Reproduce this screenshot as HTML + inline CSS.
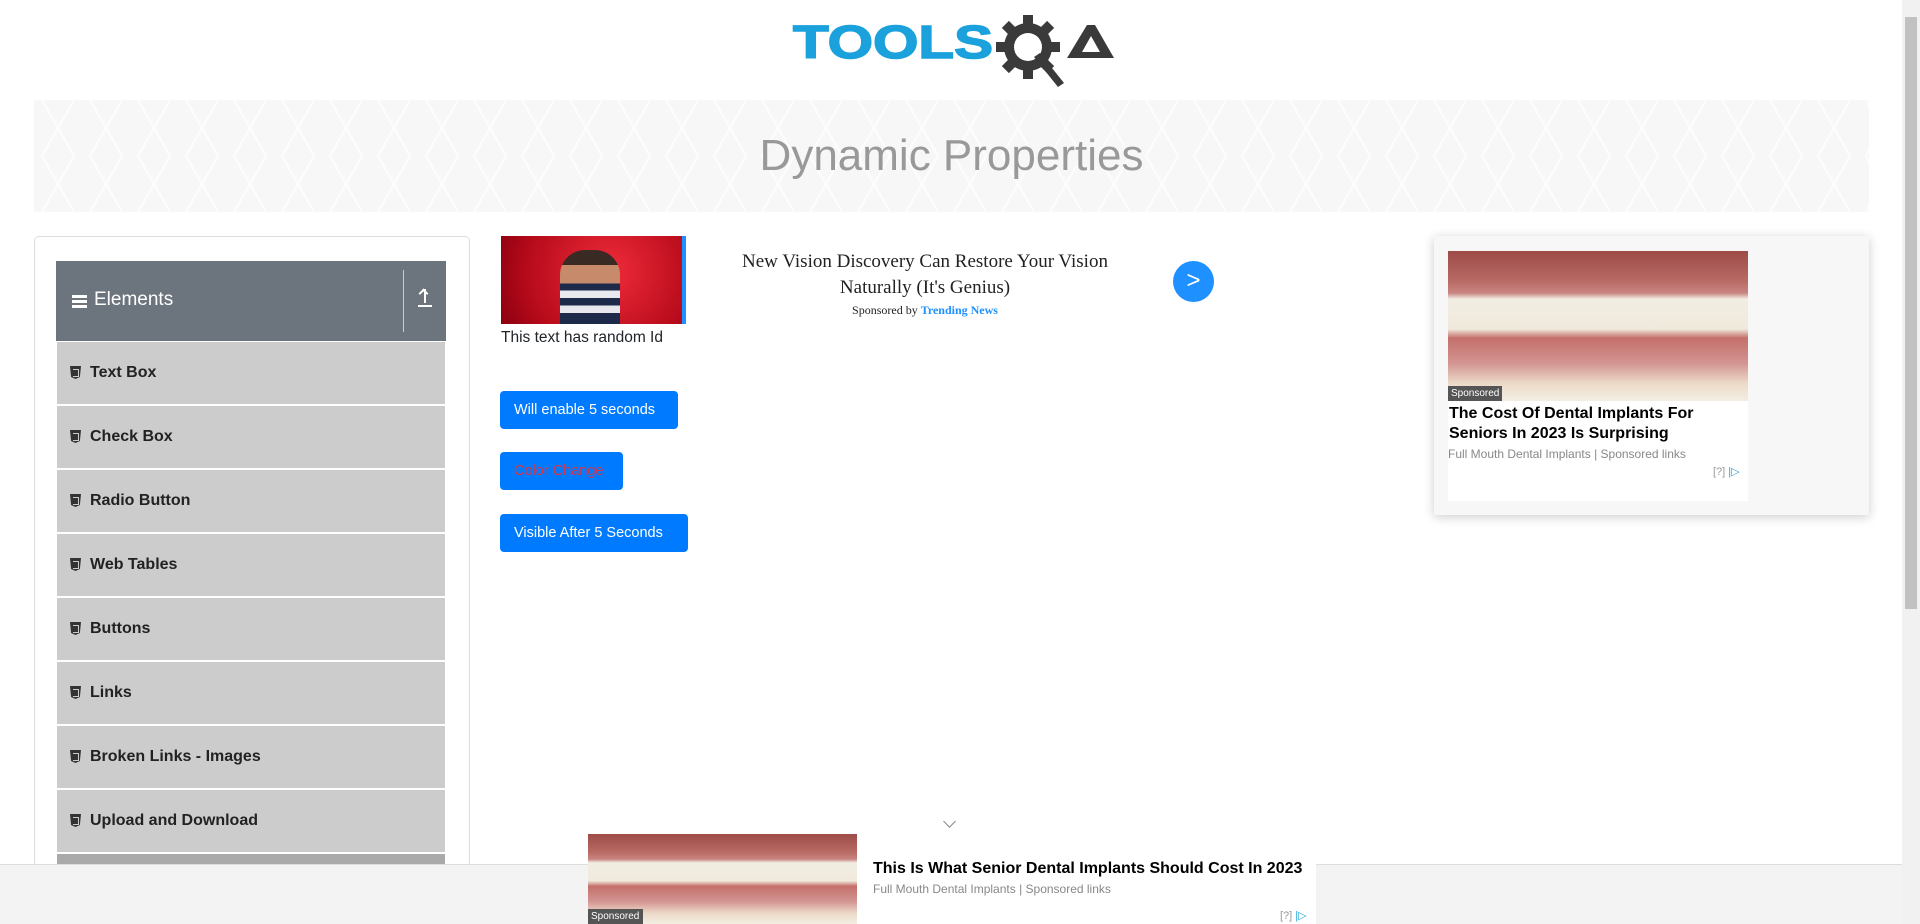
<!DOCTYPE html>
<html><head><meta charset="utf-8"><style>
*{box-sizing:border-box;margin:0;padding:0}
html,body{width:1920px;height:924px;overflow:hidden;background:#fff;font-family:"Liberation Sans",sans-serif;color:#212529}
.abs{position:absolute}
.banner{left:34px;top:100px;width:1835px;height:112px;background:#f7f7f7;
background-image:linear-gradient(60deg,transparent 48%,#fdfdfd 49%,#fdfdfd 51%,transparent 52%),linear-gradient(-60deg,transparent 48%,#fdfdfd 49%,#fdfdfd 51%,transparent 52%);background-size:48px 56px;}
.title{left:34px;top:100px;width:1835px;height:112px;text-align:center;line-height:112px;font-size:44px;color:#999;font-weight:300}
.card{left:34px;top:236px;width:436px;height:680px;border:1px solid #ddd;border-radius:5px}
.hdr{left:56px;top:261px;width:390px;height:80px;background:#6c757d;color:#fff}
.item{left:57px;width:388px;height:62px;background:#ccc;font-weight:bold;font-size:16px;color:#222;line-height:62px;padding-left:33px}
.ic{position:absolute;left:13px;top:24px;width:11px;height:13px;background:#333;clip-path:polygon(0 0,100% 0,90% 85%,50% 100%,10% 85%)}
.ic:after{content:"";position:absolute;left:3px;top:3px;width:5px;height:6px;border:1.5px solid #ccc;border-left:none}
.btn{left:500px;height:38px;background:#007bff;color:#fff;border-radius:4px;font-size:14.5px;line-height:38px;padding-left:14px;white-space:nowrap}
.bar{left:0;top:864px;width:1902px;height:60px;background:#f3f3f3;border-top:1px solid #ddd}
.teeth{background:linear-gradient(180deg,#9d4b48 0%,#b86a64 20%,#c98582 28%,#f1ede2 32%,#efeadc 52%,#c46f6b 58%,#d39592 75%,#ecd9c8 88%,#f3efe2 100%)}
</style></head><body>
<svg class="abs" style="left:790px;top:14px" width="330" height="80" viewBox="0 0 330 80">
<text x="3" y="44" font-family="Liberation Sans" font-weight="bold" font-size="46" fill="#1ba1dc" textLength="200" lengthAdjust="spacingAndGlyphs" stroke="#1ba1dc" stroke-width="1.5">TOOLS</text>
<g transform="translate(238,33)" fill="#3a3a3a">
<circle r="24"/>
<g><rect x="-5" y="-32" width="10" height="12"/><rect x="-5" y="-32" width="10" height="12" transform="rotate(45)"/><rect x="-5" y="-32" width="10" height="12" transform="rotate(90)"/><rect x="-5" y="-32" width="10" height="12" transform="rotate(135)"/><rect x="-5" y="-32" width="10" height="12" transform="rotate(180)"/><rect x="-5" y="-32" width="10" height="12" transform="rotate(225)"/><rect x="-5" y="-32" width="10" height="12" transform="rotate(270)"/><rect x="-5" y="-32" width="10" height="12" transform="rotate(315)"/></g>
<circle r="14" fill="#fff"/>
<path d="M6 10 L30 40 L36 36 L12 6 Z"/>
</g>
<path d="M277 44 L297 11 L305 11 L324 44 Z M292 38 L310 38 L301 22 Z" fill="#3a3a3a" fill-rule="evenodd"/>
</svg>
<div class="abs banner"></div>
<div class="abs title">Dynamic Properties</div>
<div class="abs card"></div>
<div class="abs hdr">
<div class="abs" style="left:16px;top:34px;width:15px;height:3px;background:#fff;box-shadow:0 5px 0 #fff,0 10px 0 #fff"></div>
<div class="abs" style="left:38px;top:0;line-height:78px;font-size:19px">Elements</div>
<div class="abs" style="left:347px;top:9px;width:1px;height:62px;background:#ccc"></div>
<div class="abs" style="left:362px;top:26px;width:14px;height:20px;border-bottom:2px solid #fff"></div>
<div class="abs" style="left:368px;top:28px;width:2px;height:14px;background:#fff"></div>
<div class="abs" style="left:364px;top:29px;width:7px;height:7px;border-left:2px solid #fff;border-top:2px solid #fff;transform:rotate(45deg)"></div>
</div>
<div class="abs item" style="top:342px"><i class="ic"></i>Text Box</div>
<div class="abs item" style="top:406px"><i class="ic"></i>Check Box</div>
<div class="abs item" style="top:470px"><i class="ic"></i>Radio Button</div>
<div class="abs item" style="top:534px"><i class="ic"></i>Web Tables</div>
<div class="abs item" style="top:598px"><i class="ic"></i>Buttons</div>
<div class="abs item" style="top:662px"><i class="ic"></i>Links</div>
<div class="abs item" style="top:726px"><i class="ic"></i>Broken Links - Images</div>
<div class="abs item" style="top:790px"><i class="ic"></i>Upload and Download</div>
<div class="abs" style="left:57px;top:854px;width:388px;height:12px;background:#aaa"></div>

<div class="abs" style="left:501px;top:236px;width:182px;height:88px;background:radial-gradient(circle at 60% 40%,#ef2b3a,#b50a1a 70%,#8a0010)"></div>
<div class="abs" style="left:560px;top:250px;width:60px;height:74px;background:linear-gradient(180deg,#3a2a24 0 20%,#c78a6a 20% 45%,#1d2a4a 45% 55%,#e8e8ee 55% 65%,#1d2a4a 65% 75%,#e8e8ee 75% 85%,#1d2a4a 85%);border-radius:25px 25px 0 0"></div>
<div class="abs" style="left:682px;top:236px;width:4px;height:88px;background:#1e90ff"></div>
<div class="abs" style="left:710px;top:249px;width:430px;text-align:center;font-family:'Liberation Serif',serif;font-size:19px;line-height:26px;color:#222">New Vision Discovery Can Restore Your Vision<br>Naturally (It's Genius)</div>
<div class="abs" style="left:710px;top:303px;width:430px;text-align:center;font-family:'Liberation Serif',serif;font-size:12px;color:#222">Sponsored by <b style="color:#1e90ff">Trending News</b></div>
<div class="abs" style="left:1173px;top:261px;width:41px;height:41px;border-radius:50%;background:#1e90ff;color:#fff;text-align:center;line-height:40px;font-size:24px">&gt;</div>
<div class="abs" style="left:501px;top:329px;font-size:15.5px">This text has random Id</div>

<div class="abs btn" style="top:391px;width:178px">Will enable 5 seconds</div>
<div class="abs btn" style="top:452px;width:123px;color:#dc3545">Color Change</div>
<div class="abs btn" style="top:514px;width:188px">Visible After 5 Seconds</div>

<div class="abs" style="left:1434px;top:236px;width:435px;height:279px;background:#f7f7f7;box-shadow:0 2px 10px rgba(0,0,0,.2)"></div>
<div class="abs" style="left:1448px;top:251px;width:300px;height:250px;background:#fff"></div>
<div class="abs teeth" style="left:1448px;top:251px;width:300px;height:150px"></div>
<div class="abs" style="left:1448px;top:386px;width:54px;height:15px;background:#555;color:#fff;font-size:10px;line-height:15px;padding-left:3px">Sponsored</div>
<div class="abs" style="left:1449px;top:404px;width:300px;font-weight:bold;font-size:16px;line-height:20px;color:#000">The Cost Of Dental Implants For Seniors In 2023 Is Surprising</div>
<div class="abs" style="left:1448px;top:447px;font-size:12px;color:#888">Full Mouth Dental Implants | Sponsored links</div>
<div class="abs" style="left:1713px;top:465px;font-size:11px;color:#999">[?] <span style="color:#2aa6d6">|▷</span></div>

<div class="abs" style="left:1902px;top:0;width:18px;height:924px;background:#f1f1f1"></div>
<div class="abs" style="left:1905px;top:17px;width:12px;height:592px;background:#c1c1c1"></div>

<div class="abs bar"></div>
<div class="abs" style="left:945px;top:817px;width:9px;height:9px;border-right:1px solid #888;border-bottom:1px solid #888;transform:rotate(45deg)"></div>
<div class="abs teeth" style="left:588px;top:834px;width:269px;height:90px"></div>
<div class="abs" style="left:588px;top:909px;width:55px;height:15px;background:#555;color:#fff;font-size:10px;line-height:15px;padding-left:3px">Sponsored</div>
<div class="abs" style="left:857px;top:834px;width:459px;height:90px;background:#fff"></div>
<div class="abs" style="left:873px;top:860px;font-weight:bold;font-size:16px;color:#000">This Is What Senior Dental Implants Should Cost In 2023</div>
<div class="abs" style="left:873px;top:882px;font-size:12px;color:#888">Full Mouth Dental Implants | Sponsored links</div>
<div class="abs" style="left:1280px;top:909px;font-size:11px;color:#999">[?] <span style="color:#2aa6d6">|▷</span></div>
</body></html>
